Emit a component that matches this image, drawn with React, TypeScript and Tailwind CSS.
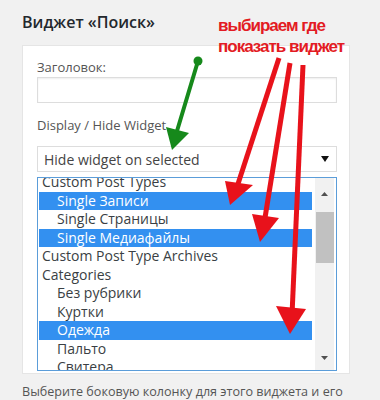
import React from 'react';

type Row = { label: string; level: 0 | 1; selected?: boolean };

const rows: Row[] = [
  { label: 'Custom Post Types', level: 0 },
  { label: 'Single Записи', level: 1, selected: true },
  { label: 'Single Страницы', level: 1 },
  { label: 'Single Медиафайлы', level: 1, selected: true },
  { label: 'Custom Post Type Archives', level: 0 },
  { label: 'Categories', level: 0 },
  { label: 'Без рубрики', level: 1 },
  { label: 'Куртки', level: 1 },
  { label: 'Одежда', level: 1, selected: true },
  { label: 'Пальто', level: 1 },
  { label: 'Свитера', level: 1 },
];

function Arrows() {
  return (
    <svg className="absolute inset-0 pointer-events-none" width="380" height="400" viewBox="0 0 380 400">
      {/* green */}
      <line x1="198" y1="61" x2="177" y2="131" stroke="#16891b" strokeWidth="4" strokeLinecap="round" />
      <circle cx="198" cy="61" r="4.5" fill="#16891b" />
      <polygon points="166,127 189,133 172,150" fill="#16891b" />
      {/* red */}
      <line x1="279" y1="58" x2="236" y2="190" stroke="#e8121b" strokeWidth="5" />
      <polygon points="225,181 253,185 230,205" fill="#e8121b" />
      <line x1="290" y1="63" x2="264" y2="224" stroke="#e8121b" strokeWidth="5" />
      <polygon points="252,214 279,218 260,242" fill="#e8121b" />
      <line x1="303" y1="65" x2="292" y2="315" stroke="#e8121b" strokeWidth="5" />
      <polygon points="276,306 306,309 290,334" fill="#e8121b" />
    </svg>
  );
}

export default function App() {
  return (
    <div
      className="relative w-[380px] h-[400px] overflow-hidden bg-[#f1f1f1] pl-[22px]"
      style={{ fontFamily: "'Open Sans', 'Noto Sans', sans-serif" }}
    >
      <div className="pt-[10px] h-[45px] text-[16px] leading-[24px] font-semibold text-[#23282d]">
        Виджет «Поиск»
      </div>

      {/* карточка виджета */}
      <div className="w-[328px] bg-white border border-[#e5e5e5] pt-[12px] pl-[14px] pr-[12px] pb-[2px]">
        <div className="text-[13px] leading-[18px] text-[#555]">Заголовок:</div>
        <div className="mt-[1px] h-[26px] border border-[#ddd] shadow-[inset_0_1px_2px_rgba(0,0,0,0.07)]" />

        <div className="mt-[13px] text-[13px] leading-[18px] text-[#555]">Display / Hide Widget</div>
        <div className="mt-[12px] h-[26px] border border-[#ddd] flex items-center justify-between pl-[6px] pr-[7px]">
          <span className="text-[14px] text-[#444]">Hide widget on selected</span>
          <svg width="8" height="6" viewBox="0 0 8 6">
            <polygon points="0,0 8,0 4,6" fill="#111" />
          </svg>
        </div>

        {/* список */}
        <div className="mt-[5px] h-[194px] border border-[#5b9dd9] flex overflow-hidden">
          <div className="w-[274px] pl-[1px] overflow-hidden">
            <div className="-mt-[5px]">
              {rows.map((r) => (
                <div
                  key={r.label}
                  className={`h-[18.5px] leading-[18.5px] text-[14px] whitespace-nowrap ${
                    r.level === 1 ? 'pl-[18px]' : 'pl-[3px]'
                  } ${r.selected ? 'bg-[#3390f0] text-white' : 'text-[#3a3f44]'}`}
                >
                  {r.label}
                </div>
              ))}
            </div>
          </div>
          <div className="ml-[3px] w-[19px] bg-[#f1f1f1] flex flex-col items-center">
            <div className="h-[22px] flex items-end pb-[4px]">
              <svg width="7" height="4" viewBox="0 0 7 4">
                <polygon points="0,4 7,4 3.5,0" fill="#505050" />
              </svg>
            </div>
            <div className="mt-[12px] w-[18px] h-[51px] bg-[#c1c1c1]" />
            <div className="flex-1" />
            <div className="h-[22px] flex items-start pt-[8px]">
              <svg width="7" height="4" viewBox="0 0 7 4">
                <polygon points="0,0 7,0 3.5,4" fill="#505050" />
              </svg>
            </div>
          </div>
        </div>
      </div>

      <div className="mt-[9px] text-[12.6px] leading-[18px] text-[#555] whitespace-nowrap">
        Выберите боковую колонку для этого виджета и его
      </div>

      {/* пометки */}
      <div
        className="absolute left-[218px] top-[15px] text-[17px] leading-[21px] font-bold tracking-[-1px] text-[#e31b23]"
        style={{ fontFamily: "'Liberation Sans', Arial, sans-serif" }}
      >
        <div>выбираем где</div>
        <div>показать виджет</div>
      </div>
      <Arrows />
    </div>
  );
}
